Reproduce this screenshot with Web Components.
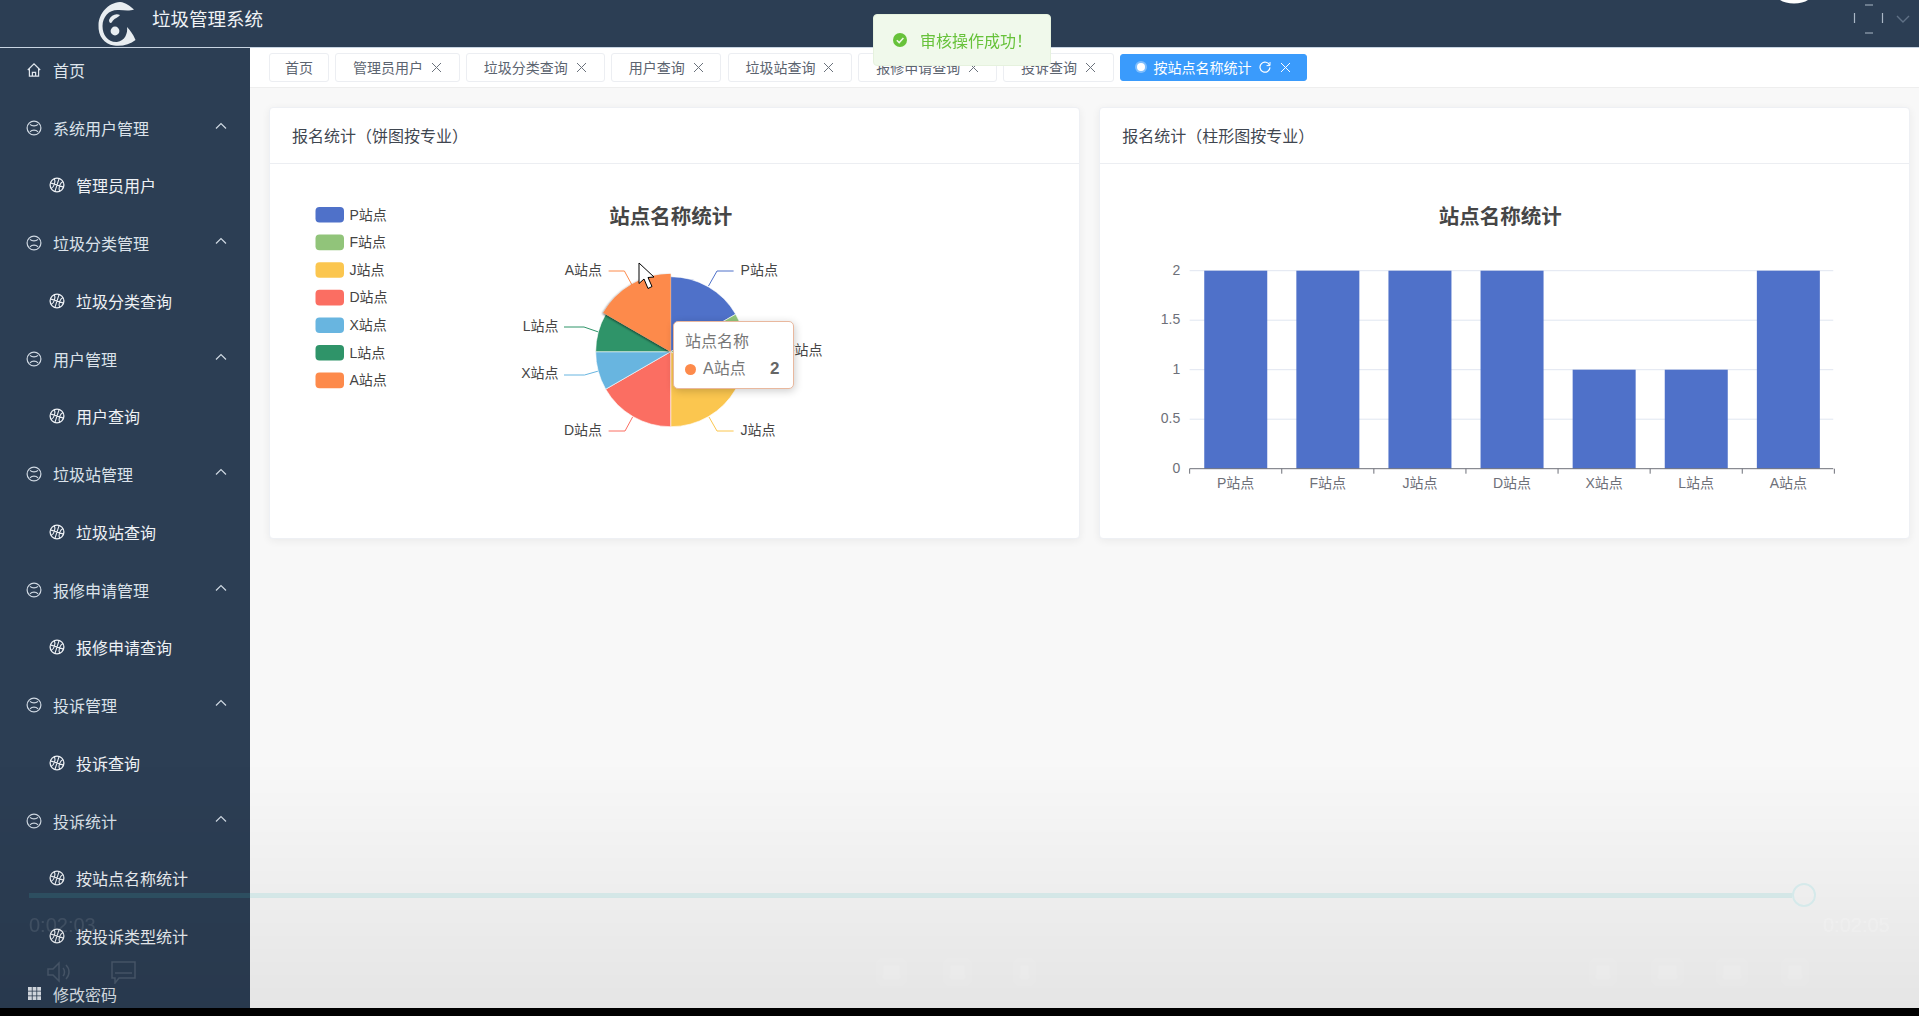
<!DOCTYPE html>
<html lang="zh">
<head>
<meta charset="utf-8">
<title>垃圾管理系统</title>
<style>
  html, body { margin: 0; height: 100%; overflow: hidden; }
  body {
    font-family: "Liberation Sans", "Noto Sans CJK SC", sans-serif;
    font-size: 14px;
    color: #495060;
    background: #f8f8f8;
    display: flex;
    flex-direction: column;
  }
  .body-row { flex: 1; min-height: 0; display: flex; }
  .black-bar { height: 8px; background: #000; flex: none; }
</style>
</head>
<body>
  <admin-header>垃圾管理系统</admin-header>
  <div class="body-row">
    <side-menu>
      <side-item icon="home" top>首页</side-item>
      <side-group label="系统用户管理"><side-item icon="ball">管理员用户</side-item></side-group>
      <side-group label="垃圾分类管理"><side-item icon="ball">垃圾分类查询</side-item></side-group>
      <side-group label="用户管理"><side-item icon="ball">用户查询</side-item></side-group>
      <side-group label="垃圾站管理"><side-item icon="ball">垃圾站查询</side-item></side-group>
      <side-group label="报修申请管理"><side-item icon="ball">报修申请查询</side-item></side-group>
      <side-group label="投诉管理"><side-item icon="ball">投诉查询</side-item></side-group>
      <side-group label="投诉统计">
        <side-item icon="ball">按站点名称统计</side-item>
        <side-item icon="ball">按投诉类型统计</side-item>
      </side-group>
      <side-item icon="grid" top>修改密码</side-item>
    </side-menu>
    <main-panel>
      <tag-bar slot="tags">
        <tag-chip plain>首页</tag-chip>
        <tag-chip>管理员用户</tag-chip>
        <tag-chip>垃圾分类查询</tag-chip>
        <tag-chip>用户查询</tag-chip>
        <tag-chip>垃圾站查询</tag-chip>
        <tag-chip>报修申请查询</tag-chip>
        <tag-chip>投诉查询</tag-chip>
        <tag-chip active>按站点名称统计</tag-chip>
      </tag-bar>
      <chart-card heading="报名统计（饼图按专业）"><pie-chart></pie-chart></chart-card>
      <chart-card heading="报名统计（柱形图按专业）"><bar-chart></bar-chart></chart-card>
    </main-panel>
  </div>
  <div class="black-bar"></div>
  <video-overlay></video-overlay>
  <toast-message>审核操作成功！</toast-message>

<script>
const ICONS = {
  home: `<svg viewBox="0 0 16 16" width="16" height="16" fill="none" stroke="currentColor" stroke-width="1.2"><path d="M1.8 8 8 1.8 14.2 8M3.4 6.8V14.2H12.6V6.8M6.4 14.2V10.4H9.6V14.2"/></svg>`,
  face: `<svg viewBox="0 0 16 16" width="16" height="16" fill="none" stroke="currentColor" stroke-width="1.2"><circle cx="8" cy="8" r="6.9"/><path d="M4 4.4C6 6.4 10 6.4 12 4.4M4 11.8C6 9.6 10 9.6 12 11.8"/></svg>`,
  ball: `<svg viewBox="0 0 16 16" width="16" height="16" fill="none" stroke="currentColor" stroke-width="1.1"><circle cx="8" cy="8" r="6.9" stroke-width="1.3"/><path d="M8 1.1V14.9M1.1 8H14.9M3.4 2.8C6 5 6 11 3.4 13.2M12.6 2.8C10 5 10 11 12.6 13.2" transform="rotate(18 8 8)"/></svg>`,
  grid: `<svg viewBox="0 0 13 13" width="13" height="13" fill="currentColor"><path d="M0 0h3.8v3.8H0zM4.6 0h3.8v3.8H4.6zM9.2 0H13v3.8H9.2zM0 4.6h3.8v3.8H0zM4.6 4.6h3.8v3.8H4.6zM9.2 4.6H13v3.8H9.2zM0 9.2h3.8V13H0zM4.6 9.2h3.8V13H4.6zM9.2 9.2H13V13H9.2z"/></svg>`,
  up: `<svg viewBox="0 0 12 8" width="12" height="8" fill="none" stroke="currentColor" stroke-width="1.2"><path d="M1 6.5 6 1.5 11 6.5"/></svg>`,
  close: `<svg viewBox="0 0 11 11" width="11" height="11" fill="none" stroke="currentColor" stroke-width="1"><path d="M1 1 10 10M10 1 1 10"/></svg>`,
  refresh: `<svg viewBox="0 0 12 12" width="12" height="12" fill="none" stroke="currentColor" stroke-width="1.2"><path d="M10.6 4.2A5 5 0 1 0 11 6.4"/><path d="M11 1V4.6H7.6" stroke-width="1"/></svg>`
};

class AdminHeader extends HTMLElement {
  constructor(){
    super();
    this.attachShadow({mode: 'open'});
  }
  connectedCallback(){
    this.shadowRoot.innerHTML = `
    <style>
      :host{
        display: flex;
        flex: none;
        height: 47px;
        padding-left: 98px;
        gap: 16px;
        background: #2c3e54;
        border-bottom: 1px solid #c8d4e2;
        color: #fff;
        overflow: hidden;
      }
      .logo{ width: 38px; height: 47px; flex: none; }
      .name{ font-size: 18.5px; line-height: 39px; color: #f0f3f6; }
      .right{ margin-left: auto; margin-right: 9px; width: 130px; height: 47px; flex: none; }
    </style>
    <svg class="logo" viewBox="18 0 38 47">
      <defs><filter id="soft"><feGaussianBlur stdDeviation=".6"/></filter></defs>
      <g fill="#e8edf1" filter="url(#soft)">
        <path d="M40 2C28 3 19 13 18.5 25 18 36 24 44 34 45.5 42 46.5 50 44.5 55.5 40 53 34 50 30 47 27 48 33 45 41 37 42 28 42.5 22.5 35 22.5 26 22.5 16 30 9 39 10 45 10.5 50 11 54 9.5 50 6 46 2.5 40 2Z"/>
        <circle cx="35" cy="31" r="4.4"/>
        <path d="M29 20C31 15 36 13 40 15 38 18 34 18 32 22 31 24 29 23 29 20Z"/>
      </g>
    </svg>
    <span class="name"><slot></slot></span>
    <svg class="right" viewBox="1780 0 130 47" fill="none">
      <path d="M1780 0C1786 4.5 1802 4.5 1808 0Z" fill="#fff"/>
      <path d="M1865 5H1873M1865 33H1873M1854.5 13V23M1882.5 13V23" stroke="#aab7c6" stroke-width="1.2"/>
      <path d="M1897 16 1903 22 1909 16" stroke="#5f7186" stroke-width="1.4"/>
    </svg>
    `;
  }
}
customElements.define('admin-header', AdminHeader);

class SideMenu extends HTMLElement {
  constructor(){
    super();
    this.attachShadow({mode: 'open'});
  }
  connectedCallback(){
    this.shadowRoot.innerHTML = `
    <style>
      :host{
        display: block;
        flex: none;
        width: 250px;
        background: #2c3e54;
        overflow: hidden;
      }
      .list{ margin-top: -7px; display: flex; flex-direction: column; }
    </style>
    <div class="list"><slot></slot></div>
    `;
  }
}
customElements.define('side-menu', SideMenu);

class SideGroup extends HTMLElement {
  constructor(){
    super();
    this.attachShadow({mode: 'open'});
  }
  connectedCallback(){
    const label = this.getAttribute('label');
    this.shadowRoot.innerHTML = `
    <style>
      :host{ display: block; }
      .title{
        height: 57.75px;
        display: flex;
        align-items: center;
        padding-left: 26px;
        color: #dbe2ea;
        font-size: 16px;
      }
      .icon{ display: flex; width: 16px; margin-right: 11px; color: #cfd8e2; }
      .chev{ display: flex; margin-left: auto; margin-right: 23px; margin-top: -4px; color: #cfd8e2; }
    </style>
    <div class="title">
      <span class="icon">${ICONS.face}</span>
      <span>${label}</span>
      <span class="chev">${ICONS.up}</span>
    </div>
    <slot></slot>
    `;
  }
}
customElements.define('side-group', SideGroup);

class SideItem extends HTMLElement {
  constructor(){
    super();
    this.attachShadow({mode: 'open'});
  }
  connectedCallback(){
    this.shadowRoot.innerHTML = `
    <style>
      :host{
        display: flex;
        align-items: center;
        height: 57.75px;
        padding-left: 49px;
        font-size: 16px;
        color: #eef1f5;
      }
      :host([top]){ padding-left: 26px; color: #dfe5ec; }
      .icon{ display: flex; justify-content: center; width: 16px; margin-right: 11px; }
    </style>
    <span class="icon">${ICONS[this.getAttribute('icon')]}</span>
    <slot></slot>
    `;
  }
}
customElements.define('side-item', SideItem);

class MainPanel extends HTMLElement {
  constructor(){
    super();
    this.attachShadow({mode: 'open'});
  }
  connectedCallback(){
    this.shadowRoot.innerHTML = `
    <style>
      :host{ display: flex; flex-direction: column; flex: 1; min-width: 0; }
      .cards{ display: flex; gap: 19px; padding: 19px 9px 0 18.5px; }
    </style>
    <slot name="tags"></slot>
    <div class="cards"><slot></slot></div>
    `;
  }
}
customElements.define('main-panel', MainPanel);

class TagBar extends HTMLElement {
  constructor(){
    super();
    this.attachShadow({mode: 'open'});
  }
  connectedCallback(){
    this.shadowRoot.innerHTML = `
    <style>
      :host{
        display: flex;
        align-items: center;
        gap: 6.3px;
        box-sizing: border-box;
        height: 40px;
        padding: 0 0 1px 19px;
        background: #fff;
        border-bottom: 1px solid #eeeeee;
      }
    </style>
    <slot></slot>
    `;
  }
}
customElements.define('tag-bar', TagBar);

class TagChip extends HTMLElement {
  constructor(){
    super();
    this.attachShadow({mode: 'open'});
  }
  connectedCallback(){
    const active = this.hasAttribute('active');
    const plain = this.hasAttribute('plain');
    this.shadowRoot.innerHTML = `
    <style>
      :host{
        display: flex;
        align-items: center;
        box-sizing: border-box;
        height: 29px;
        padding: 0 16.75px;
        background: #fff;
        border: 1px solid #eceef2;
        border-radius: 3px;
        color: #5c6470;
        font-size: 14px;
        white-space: nowrap;
      }
      :host([plain]){ padding: 0 15px; }
      :host([active]){
        height: 27px;
        padding: 0 15.5px;
        background: #3a9bfc;
        border-color: #3a9bfc;
        color: #fff;
      }
      .close{ display: flex; margin-left: 8px; color: #6b727c; }
      :host([active]) .close{ margin-left: 9px; color: #fff; }
      .dot{
        width: 8px; height: 8px; border-radius: 50%;
        background: #fff;
        box-shadow: 0 0 0 2px rgba(255,255,255,.35);
        margin-right: 9px;
      }
      .refresh{ display: flex; margin-left: 7px; }
    </style>
    ${active ? '<span class="dot"></span>' : ''}
    <slot></slot>
    ${active ? `<span class="refresh">${ICONS.refresh}</span>` : ''}
    ${plain ? '' : `<span class="close">${ICONS.close}</span>`}
    `;
  }
}
customElements.define('tag-chip', TagChip);

class ChartCard extends HTMLElement {
  constructor(){
    super();
    this.attachShadow({mode: 'open'});
  }
  connectedCallback(){
    this.shadowRoot.innerHTML = `
    <style>
      :host{
        display: block;
        flex: 1;
        min-width: 0;
        height: 432px;
        box-sizing: border-box;
        background: #fff;
        border: 1px solid #eef0f4;
        border-radius: 4px;
        box-shadow: 0 2px 8px rgba(0,0,0,.06);
        overflow: hidden;
      }
      .head{
        height: 56px;
        box-sizing: border-box;
        padding: 0 0 2px 22.5px;
        border-bottom: 1px solid #eceef2;
        display: flex;
        align-items: center;
        font-size: 16px;
        color: #3f4650;
      }
    </style>
    <div class="head">${this.getAttribute('heading')}</div>
    <slot></slot>
    `;
  }
}
customElements.define('chart-card', ChartCard);

const STATIONS = [
  {name: 'P站点', value: 2, color: '#4f71c9'},
  {name: 'F站点', value: 2, color: '#91c47a'},
  {name: 'J站点', value: 2, color: '#fbc64f'},
  {name: 'D站点', value: 2, color: '#fb6e62'},
  {name: 'X站点', value: 1, color: '#68b5e0'},
  {name: 'L站点', value: 1, color: '#2f9469'},
  {name: 'A站点', value: 2, color: '#fd8a4b'}
];

class PieChart extends HTMLElement {
  constructor(){
    super();
    this.attachShadow({mode: 'open'});
  }
  slice(cx, cy, r, from, to){
    const rad = a => (a - 90) * Math.PI / 180;
    const x1 = cx + r * Math.cos(rad(from)), y1 = cy + r * Math.sin(rad(from));
    const x2 = cx + r * Math.cos(rad(to)), y2 = cy + r * Math.sin(rad(to));
    return `M${cx} ${cy}L${x1.toFixed(1)} ${y1.toFixed(1)}A${r} ${r} 0 0 1 ${x2.toFixed(1)} ${y2.toFixed(1)}Z`;
  }
  connectedCallback(){
    const cx = 670.7, cy = 351.7;
    const total = STATIONS.reduce((s, d) => s + d.value, 0);
    let angle = 0;
    const slices = STATIONS.map((d, i) => {
      const next = angle + d.value / total * 360;
      const hot = d.name === 'A站点';
      const path = `<path d="${this.slice(cx, cy, hot ? 78 : 75, angle, next)}" fill="${d.color}" stroke="#fff" stroke-width="${hot ? 0 : .6}" ${hot ? 'filter="url(#hot)"' : ''}/>`;
      angle = next;
      return path;
    }).join('');
    const legend = STATIONS.map((d, i) => {
      const y = 207 + i * 27.6;
      return `<rect x="315.5" y="${y}" width="28.5" height="15.6" rx="4" fill="${d.color}"/>
        <text x="349.5" y="${y + 12.5}" fill="#444">${d.name}</text>`;
    }).join('');
    // label place and leader line of each slice, read off the chart
    const labels = [
      {t: 'P站点', x: 740.6, y: 275, a: 'start', c: '#4f71c9', l: '733.6,271 717,271 708.5,286'},
      {t: 'F站点', x: 786, y: 355, a: 'start', c: '#91c47a', l: '780,351 765,351 745,342'},
      {t: 'J站点', x: 740.6, y: 435, a: 'start', c: '#fbc64f', l: '733.6,431 717,431 709,417'},
      {t: 'D站点', x: 602, y: 435, a: 'end', c: '#fb6e62', l: '608.6,431 625,431 632.6,417'},
      {t: 'X站点', x: 558.6, y: 378, a: 'end', c: '#68b5e0', l: '564,375 584.5,375 598.5,371'},
      {t: 'L站点', x: 558.6, y: 331, a: 'end', c: '#2f9469', l: '564,327 584,327 598.5,332'},
      {t: 'A站点', x: 602, y: 275, a: 'end', c: '#fd8a4b', l: '608.6,271 624.4,271 632,285'}
    ].map(d => `<polyline points="${d.l}" fill="none" stroke="${d.c}" stroke-width="1"/>
      <text x="${d.x}" y="${d.y}" text-anchor="${d.a}" fill="#464646">${d.t}</text>`).join('');
    this.shadowRoot.innerHTML = `
    <style>
      :host{ display: block; position: relative; height: 374px; }
      svg{ display: block; width: 100%; height: 100%; font-size: 14px; }
      .title{ font-size: 20.5px; font-weight: 700; fill: #464646; }
      .tip{
        position: absolute;
        left: 403px;
        top: 157px;
        box-sizing: border-box;
        width: 121px;
        height: 68px;
        padding: 8px 13px 0 11.5px;
        background: #fff;
        border: 1.5px solid #e9b89e;
        border-radius: 5px;
        box-shadow: 1px 2px 8px rgba(0,0,0,.2);
        font-size: 16px;
        line-height: 24px;
        color: #777;
      }
      .row{ display: flex; align-items: center; margin-top: 3px; }
      .dot{ width: 11px; height: 11px; border-radius: 50%; background: #fd8a4b; margin-right: 7px; }
      b{ margin-left: auto; color: #666; font-size: 17px; }
    </style>
    <svg viewBox="270 164 809.25 374">
      <defs>
        <filter id="hot" x="-30%" y="-30%" width="160%" height="160%">
          <feDropShadow dx="-1" dy="1" stdDeviation="1" flood-color="#000" flood-opacity=".55"/>
        </filter>
      </defs>
      ${legend}
      <text class="title" x="${cx}" y="224" text-anchor="middle">站点名称统计</text>
      ${labels}
      ${slices}
      <path d="M639 263V283.5L644 279 648 288.5 652 286.5 648 277.5 654 277Z" fill="#fff" stroke="#000" stroke-width="1"/>
    </svg>
    <div class="tip">
      站点名称
      <div class="row"><span class="dot"></span>A站点<b>2</b></div>
    </div>
    `;
  }
}
customElements.define('pie-chart', PieChart);

class BarChart extends HTMLElement {
  constructor(){
    super();
    this.attachShadow({mode: 'open'});
  }
  connectedCallback(){
    const left = 1190.4, band = 92.1, base = 468.7, unit = 99;
    const rows = ['0', '0.5', '1', '1.5', '2'].map((t, i) => {
      const y = base - i * unit / 2;
      return `${i ? `<line x1="${left}" x2="1834" y1="${y}" y2="${y}" stroke="#e0e6f1"/>` : ''}
        <text x="1181" y="${y + 4}" text-anchor="end">${t}</text>`;
    }).join('');
    const bars = STATIONS.map((d, i) => {
      const x = left + i * band;
      return `<rect x="${x + 14.6}" y="${base - d.value * unit}" width="63" height="${d.value * unit}" fill="#4f71c9"/>
        <text x="${x + band / 2}" y="487.5" text-anchor="middle">${d.name}</text>`;
    }).join('');
    const ticks = STATIONS.concat({}).map((d, i) => {
      const x = left + i * band;
      return `<line x1="${x}" x2="${x}" y1="${base}" y2="473.7" stroke="#6e7079"/>`;
    }).join('');
    this.shadowRoot.innerHTML = `
    <style>
      :host{ display: block; height: 374px; }
      svg{ display: block; width: 100%; height: 100%; font-size: 14px; fill: #6e7079; }
      .title{ font-size: 20.5px; font-weight: 700; fill: #464646; }
    </style>
    <svg viewBox="1100.75 164 809.25 374">
      <text class="title" x="1501" y="224" text-anchor="middle">站点名称统计</text>
      ${rows}
      ${bars}
      <line x1="${left}" x2="1834" y1="${base}" y2="${base}" stroke="#6e7079"/>
      ${ticks}
    </svg>
    `;
  }
}
customElements.define('bar-chart', BarChart);

class ToastMessage extends HTMLElement {
  constructor(){
    super();
    this.attachShadow({mode: 'open'});
  }
  connectedCallback(){
    this.shadowRoot.innerHTML = `
    <style>
      :host{
        position: fixed;
        left: 873px;
        top: 14px;
        box-sizing: border-box;
        width: 178px;
        height: 52px;
        display: flex;
        align-items: center;
        padding-left: 19px;
        gap: 13px;
        background: #f0f9eb;
        border: 1px solid #e6f2de;
        border-radius: 4px;
        color: #67c23a;
        font-size: 16px;
      }
      svg{ flex: none; }
    </style>
    <svg viewBox="0 0 14 14" width="14" height="14">
      <circle cx="7" cy="7" r="7" fill="#67c23a"/>
      <path d="M3.8 7.2 6.2 9.6 10.4 5" fill="none" stroke="#f0f9eb" stroke-width="1.5"/>
    </svg>
    <slot></slot>
    `;
  }
}
customElements.define('toast-message', ToastMessage);

// the player controls of the recording lie faintly over the whole page
class VideoOverlay extends HTMLElement {
  constructor(){
    super();
    this.attachShadow({mode: 'open'});
  }
  connectedCallback(){
    const marks = [[880, 23], [947, 21], [1017, 15], [1593, 20], [1655, 25], [1720, 24], [1785, 20]]
      .map(([x, w]) => `<span class="mark" style="left:${x}px;width:${w}px"></span>`).join('');
    this.shadowRoot.innerHTML = `
    <style>
      :host{ position: fixed; inset: 0; pointer-events: none; display: block; }
      .fade{
        position: absolute; left: 0; right: 0; top: 760px; height: 248px;
        background: linear-gradient(rgba(0,0,0,0), rgba(0,0,0,.075));
      }
      .line{
        position: absolute; left: 29px; width: 1763px; top: 893px; height: 4.5px;
        background: rgba(60,190,190,.15);
      }
      .knob{
        position: absolute; left: 1792px; top: 883px; width: 24px; height: 24px;
        box-sizing: border-box; border: 2px solid #d5e9ea; border-radius: 50%;
      }
      .time{ position: absolute; top: 912px; font-size: 20px; line-height: 26px; }
      .now{ left: 29px; color: rgba(255,255,255,.1); }
      .end{ left: 1823px; color: rgba(255,255,255,.14); }
      .ctl{ position: absolute; top: 961px; color: rgba(255,255,255,.13); }
      .mark{
        position: absolute; top: 962px; height: 20px;
        background: rgba(255,255,255,.07);
        filter: blur(2px);
      }
    </style>
    <div class="fade"></div>
    <div class="line"></div>
    <div class="knob"></div>
    <div class="time now">0:02:03</div>
    <div class="time end">0:02:05</div>
    <svg class="ctl" style="left:47px" width="26" height="22" viewBox="0 0 26 22" fill="none" stroke="currentColor" stroke-width="1.5">
      <path d="M1 8H6L12 2V20L6 14H1ZM16 7C18 9 18 13 16 15M19 4C23 8 23 14 19 18"/>
    </svg>
    <svg class="ctl" style="left:111px" width="25" height="23" viewBox="0 0 25 23" fill="none" stroke="currentColor" stroke-width="1.5">
      <path d="M1 1H24V17H8L4 22V17H1ZM4 12H21"/>
    </svg>
    ${marks}
    `;
  }
}
customElements.define('video-overlay', VideoOverlay);
</script>
</body>
</html>
